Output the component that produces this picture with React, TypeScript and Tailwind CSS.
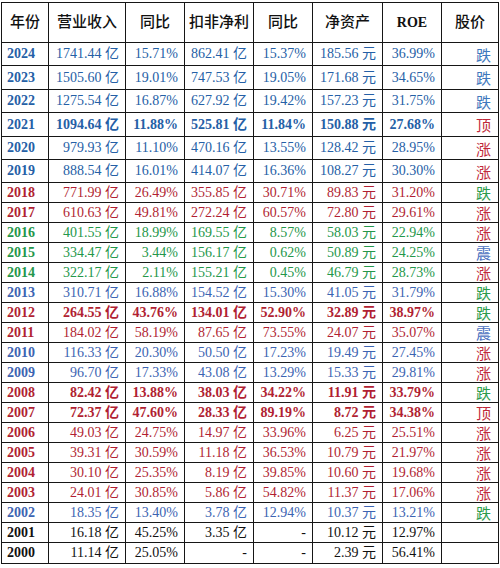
type Row = {
  year: string
  rev: string
  yoy: string
  profit: string
  yoy2: string
  nav: string
  roe: string
  trend: string
  tone: 'blue' | 'blue2' | 'red' | 'green' | 'black'
  trendTone?: 'up' | 'down' | 'flat' | 'downBlue'
  bold?: boolean
}

const rows: Row[] = [
  { year: '2024', rev: '1741.44', yoy: '15.71%', profit: '862.41', yoy2: '15.37%', nav: '185.56', roe: '36.99%', trend: '跌', tone: 'blue', trendTone: 'downBlue' },
  { year: '2023', rev: '1505.60', yoy: '19.01%', profit: '747.53', yoy2: '19.05%', nav: '171.68', roe: '34.65%', trend: '跌', tone: 'blue', trendTone: 'downBlue' },
  { year: '2022', rev: '1275.54', yoy: '16.87%', profit: '627.92', yoy2: '19.42%', nav: '157.23', roe: '31.75%', trend: '跌', tone: 'blue', trendTone: 'downBlue' },
  { year: '2021', rev: '1094.64', yoy: '11.88%', profit: '525.81', yoy2: '11.84%', nav: '150.88', roe: '27.68%', trend: '顶', tone: 'blue', trendTone: 'up', bold: true },
  { year: '2020', rev: '979.93', yoy: '11.10%', profit: '470.16', yoy2: '13.55%', nav: '128.42', roe: '28.95%', trend: '涨', tone: 'blue', trendTone: 'up' },
  { year: '2019', rev: '888.54', yoy: '16.01%', profit: '414.07', yoy2: '16.36%', nav: '108.27', roe: '30.30%', trend: '涨', tone: 'blue', trendTone: 'up' },
  { year: '2018', rev: '771.99', yoy: '26.49%', profit: '355.85', yoy2: '30.71%', nav: '89.83', roe: '31.20%', trend: '跌', tone: 'red', trendTone: 'down' },
  { year: '2017', rev: '610.63', yoy: '49.81%', profit: '272.24', yoy2: '60.57%', nav: '72.80', roe: '29.61%', trend: '涨', tone: 'red', trendTone: 'up' },
  { year: '2016', rev: '401.55', yoy: '18.99%', profit: '169.55', yoy2: '8.57%', nav: '58.03', roe: '22.94%', trend: '涨', tone: 'green', trendTone: 'up' },
  { year: '2015', rev: '334.47', yoy: '3.44%', profit: '156.17', yoy2: '0.62%', nav: '50.89', roe: '24.25%', trend: '震', tone: 'green', trendTone: 'flat' },
  { year: '2014', rev: '322.17', yoy: '2.11%', profit: '155.21', yoy2: '0.45%', nav: '46.79', roe: '28.73%', trend: '涨', tone: 'green', trendTone: 'up' },
  { year: '2013', rev: '310.71', yoy: '16.88%', profit: '154.52', yoy2: '15.30%', nav: '41.05', roe: '31.79%', trend: '跌', tone: 'blue2', trendTone: 'down' },
  { year: '2012', rev: '264.55', yoy: '43.76%', profit: '134.01', yoy2: '52.90%', nav: '32.89', roe: '38.97%', trend: '跌', tone: 'red', trendTone: 'down', bold: true },
  { year: '2011', rev: '184.02', yoy: '58.19%', profit: '87.65', yoy2: '73.55%', nav: '24.07', roe: '35.07%', trend: '震', tone: 'red', trendTone: 'flat' },
  { year: '2010', rev: '116.33', yoy: '20.30%', profit: '50.50', yoy2: '17.23%', nav: '19.49', roe: '27.45%', trend: '涨', tone: 'blue2', trendTone: 'up' },
  { year: '2009', rev: '96.70', yoy: '17.33%', profit: '43.08', yoy2: '13.29%', nav: '15.33', roe: '29.81%', trend: '涨', tone: 'blue2', trendTone: 'up' },
  { year: '2008', rev: '82.42', yoy: '13.88%', profit: '38.03', yoy2: '34.22%', nav: '11.91', roe: '33.79%', trend: '跌', tone: 'red', trendTone: 'down', bold: true },
  { year: '2007', rev: '72.37', yoy: '47.60%', profit: '28.33', yoy2: '89.19%', nav: '8.72', roe: '34.38%', trend: '顶', tone: 'red', trendTone: 'up', bold: true },
  { year: '2006', rev: '49.03', yoy: '24.75%', profit: '14.97', yoy2: '33.96%', nav: '6.25', roe: '25.51%', trend: '涨', tone: 'red', trendTone: 'up' },
  { year: '2005', rev: '39.31', yoy: '30.59%', profit: '11.18', yoy2: '36.53%', nav: '10.79', roe: '21.97%', trend: '涨', tone: 'red', trendTone: 'up' },
  { year: '2004', rev: '30.10', yoy: '25.35%', profit: '8.19', yoy2: '39.85%', nav: '10.60', roe: '19.68%', trend: '涨', tone: 'red', trendTone: 'up' },
  { year: '2003', rev: '24.01', yoy: '30.85%', profit: '5.86', yoy2: '54.82%', nav: '11.37', roe: '17.06%', trend: '涨', tone: 'red', trendTone: 'up' },
  { year: '2002', rev: '18.35', yoy: '13.40%', profit: '3.78', yoy2: '12.94%', nav: '10.37', roe: '13.21%', trend: '跌', tone: 'blue2', trendTone: 'down' },
  { year: '2001', rev: '16.18', yoy: '45.25%', profit: '3.35', yoy2: '-', nav: '10.12', roe: '12.97%', trend: '', tone: 'black' },
  { year: '2000', rev: '11.14', yoy: '25.05%', profit: '', yoy2: '-', nav: '2.39', roe: '56.41%', trend: '', tone: 'black' },
]

const toneClass = {
  blue: 'text-[#2560a6]',
  blue2: 'text-[#3c64b2]',
  red: 'text-[#b11f33]',
  green: 'text-[#24974a]',
  black: 'text-[#111]',
}

const trendClass = {
  up: 'text-[#c0283a]',
  down: 'text-[#2c9c4c]',
  flat: 'text-[#4a70c0]',
  downBlue: 'text-[#3f78bd]',
}

// first six data rows are a bit taller than the rest
const rowHeights = ['h-[23px]', 'h-[24px]', 'h-[23px]', 'h-[24px]', 'h-[23px]', 'h-[23px]']

const cols = ['w-[47px]', 'w-[77px]', 'w-[59px]', 'w-[69px]', 'w-[59px]', 'w-[70px]', 'w-[59px]', 'w-[56px]']

const serif = "font-['Liberation_Serif','Noto_Sans_CJK_SC',serif]"

const App = () => {
  const heads = ['年份', '营业收入', '同比', '扣非净利', '同比', '净资产', 'ROE', '股价']

  return (
    <div className="w-[500px] h-[568px] bg-white">
      <div className={`ml-[1px] pt-[2px] w-[498px] ${serif}`}>
        <div className="border border-[#161616]">
          <div className="flex h-[40px] border-b border-[#161616] text-[15px] text-[#111]">
            {heads.map((h, i) => (
              <div
                key={i}
                className={`${cols[i]} shrink-0 flex items-center justify-center ${i < 7 ? 'border-r border-[#161616]' : ''} ${h === 'ROE' ? 'font-bold text-[14px]' : 'font-medium'}`}
              >
                {h}
              </div>
            ))}
          </div>

          {rows.map((r, idx) => {
            const h = idx < 6 ? rowHeights[idx] : 'h-[20px]'
            const last = idx === rows.length - 1
            const wt = r.bold ? 'font-bold' : ''
            const cells = [
              r.rev ? `${r.rev} 亿` : '',
              r.yoy,
              r.profit ? `${r.profit} 亿` : '-',
              r.yoy2,
              `${r.nav} 元`,
              r.roe,
            ]
            return (
              <div
                key={r.year}
                className={`flex ${h} ${last ? '' : 'border-b border-[#161616]'} text-[14px] leading-none ${toneClass[r.tone]}`}
              >
                <div className={`${cols[0]} shrink-0 flex items-center pl-[5px] font-bold border-r border-[#161616]`}>
                  {r.year}
                </div>
                {cells.map((c, i) => (
                  <div
                    key={i}
                    className={`${cols[i + 1]} shrink-0 flex items-center justify-end pr-[6px] whitespace-nowrap border-r border-[#161616] ${wt}`}
                  >
                    {c}
                  </div>
                ))}
                <div
                  className={`${cols[7]} shrink-0 flex items-center justify-end pr-[7px] text-[15px] font-['Noto_Sans_CJK_SC',sans-serif] ${r.trendTone ? trendClass[r.trendTone] : ''}`}
                >
                  {r.trend}
                </div>
              </div>
            )
          })}
        </div>
      </div>
    </div>
  )
}

export default App
